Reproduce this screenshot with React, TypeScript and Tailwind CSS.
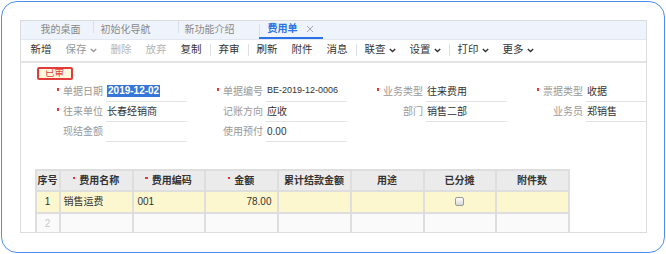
import React from "react";

const Chevron = () => (
  <svg width="7" height="5" viewBox="0 0 7 5" className="ml-[3px]">
    <polyline points="0.8,1 3.5,3.6 6.2,1" fill="none" stroke="currentColor" strokeWidth="1.4" />
  </svg>
);

const Sep = ({ h = "h-[12px]" }: { h?: string }) => (
  <div className={`w-px ${h} bg-[#dcdfe5] mx-[1px] shrink-0`} />
);

const Dot = () => (
  <span className="inline-block w-[2.5px] h-[2.5px] bg-[#e8323c] mr-[4px] -translate-y-[2px]" />
);

type FieldProps = {
  label: string;
  value?: string;
  req?: boolean;
  line?: boolean;
  selected?: boolean;
  small?: boolean;
};

const Field = ({ label, value, req, line = true, selected, small }: FieldProps) => (
  <div className="flex w-[160px] h-[20px] shrink-0">
    <div className="w-[77px] flex items-center justify-end text-[10px] text-[#999]">
      {req && <Dot />}
      {label}
    </div>
    {line ? (
      <div className="ml-[3px] w-[81px] h-full border-b border-[#e3e3e3] flex items-center pl-px">
        {selected ? (
          <span className="bg-[#3676d8] text-white font-bold text-[10px] leading-[12px] px-px">
            {value}
          </span>
        ) : (
          <span className={`text-[#333] ${small ? "text-[9px]" : "text-[10px]"}`}>{value}</span>
        )}
      </div>
    ) : null}
  </div>
);

const tools: { t: string; c?: string; dd?: boolean; sep?: boolean }[] = [
  { t: "新增" },
  { t: "保存", c: "text-[#999]", dd: true },
  { t: "删除", c: "text-[#b5b5b5]" },
  { t: "放弃", c: "text-[#b5b5b5]" },
  { t: "复制", sep: true },
  { t: "弃审", sep: true },
  { t: "刷新" },
  { t: "附件" },
  { t: "消息", sep: true },
  { t: "联查", dd: true },
  { t: "设置", dd: true, sep: true },
  { t: "打印", dd: true },
  { t: "更多", dd: true },
];

const cols = [
  { t: "序号", w: "w-[24px]" },
  { t: "费用名称", w: "w-[73px]", req: true },
  { t: "费用编码", w: "w-[72px]", req: true },
  { t: "金额", w: "w-[73px]", req: true },
  { t: "累计结款金额", w: "w-[73px]" },
  { t: "用途", w: "w-[73px]" },
  { t: "已分摊", w: "w-[72px]" },
  { t: "附件数", w: "w-[73px]" },
];

const cell = "h-full border-r-2 border-b-2 border-[#dedede] flex items-center shrink-0";

export default function App() {
  return (
    <div className="w-[666px] h-[254px] bg-white p-px font-['Liberation_Sans','Noto_Sans_CJK_SC',sans-serif]">
      <div className="h-full rounded-[16px] border-[1.5px] border-[#4d8ff0] px-[17.5px] pt-[17.5px]">
        <div className="h-[213px] border border-[#dcdcdc] overflow-hidden flex flex-col">
          {/* tabs */}
          <div className="h-[19px] shrink-0 bg-[#eff4fc] border-b border-[#e2e7ef] flex items-stretch text-[10px] text-[#888]">
            <div className="w-[71px] pl-[20px] flex items-center">我的桌面</div>
            <Sep />
            <div className="w-[82px] pl-[6px] flex items-center">初始化导航</div>
            <Sep />
            <div className="w-[81px] pl-[5px] flex items-center">新功能介绍</div>
            <div className="w-[64px] -ml-[2px] pl-[9px] flex items-center border-b-2 border-[#2b72e6] relative">
              <span className="text-[#2b72e6] font-bold">费用单</span>
              <svg width="8" height="8" viewBox="0 0 8 8" className="ml-[8px]">
                <path d="M1 1L7 7M7 1L1 7" stroke="#a8a8a8" strokeWidth="1" />
              </svg>
              <div className="absolute left-0 top-[3px] w-px h-[12px] bg-[#dcdfe5]" />
            </div>
          </div>
          {/* toolbar */}
          <div className="h-[23px] shrink-0 border-b-2 border-[#e4e4e4] flex items-center pl-[3px] text-[10.5px] text-[#333]">
            {tools.map((x) => (
              <React.Fragment key={x.t}>
                <div className={`px-[7px] flex items-center ${x.c ?? ""}`}>
                  {x.t}
                  {x.dd && <Chevron />}
                </div>
                {x.sep && <Sep />}
              </React.Fragment>
            ))}
          </div>
          {/* form */}
          <div className="flex-1 bg-white">
            <div className="ml-[16px] mt-[4px] w-[36px] h-[13px] border-2 border-[#e33a3a] rounded-[2px] bg-[#fff8dc] text-[#e33a3a] text-[9.5px] leading-none flex items-center justify-center">
              已审
            </div>
            <div className="ml-[6px] mt-[2px] flex flex-col">
              <div className="flex">
                <Field label="单据日期" value="2019-12-02" req selected />
                <Field label="单据编号" value="BE-2019-12-0006" req small />
                <Field label="业务类型" value="往来费用" req />
                <Field label="票据类型" value="收据" req />
              </div>
              <div className="flex">
                <Field label="往来单位" value="长春经销商" req />
                <Field label="记账方向" value="应收" />
                <Field label="部门" value="销售二部" />
                <Field label="业务员" value="郑销售" />
              </div>
              <div className="flex">
                <Field label="现结金额" />
                <Field label="使用预付" value="0.00" />
              </div>
            </div>
            {/* grid */}
            <div className="ml-[14px] mt-[27px] w-[535px] border-l-2 border-t-2 border-[#dedede] text-[10px]">
              <div className="flex h-[21px] bg-[#ebebeb] font-bold text-[#333]">
                {cols.map((c) => (
                  <div key={c.t} className={`${cell} ${c.w} justify-center`}>
                    {c.req && <Dot />}
                    {c.t}
                  </div>
                ))}
              </div>
              <div className="flex h-[22px] bg-[#fdf7cf] text-[#333]">
                <div className={`${cell} w-[24px] justify-center`}>1</div>
                <div className={`${cell} w-[73px] pl-[3px]`}>销售运费</div>
                <div className={`${cell} w-[72px] pl-[4px]`}>001</div>
                <div className={`${cell} w-[73px] justify-end pr-[5px]`}>78.00</div>
                <div className={`${cell} w-[73px]`} />
                <div className={`${cell} w-[73px]`} />
                <div className={`${cell} w-[72px] justify-center`}>
                  <span className="w-[9px] h-[9px] rounded-[2px] border border-[#9a9a9a] bg-gradient-to-b from-white to-[#d6d6d6]" />
                </div>
                <div className={`${cell} w-[73px]`} />
              </div>
              <div className="flex h-[22px] bg-[#fafafa] text-[#c8c8c8]">
                <div className={`${cell} w-[24px] justify-center`}>2</div>
                <div className={`${cell} w-[73px]`} />
                <div className={`${cell} w-[72px]`} />
                <div className={`${cell} w-[73px]`} />
                <div className={`${cell} w-[73px]`} />
                <div className={`${cell} w-[73px]`} />
                <div className={`${cell} w-[72px]`} />
                <div className={`${cell} w-[73px]`} />
              </div>
            </div>
          </div>
        </div>
      </div>
    </div>
  );
}
